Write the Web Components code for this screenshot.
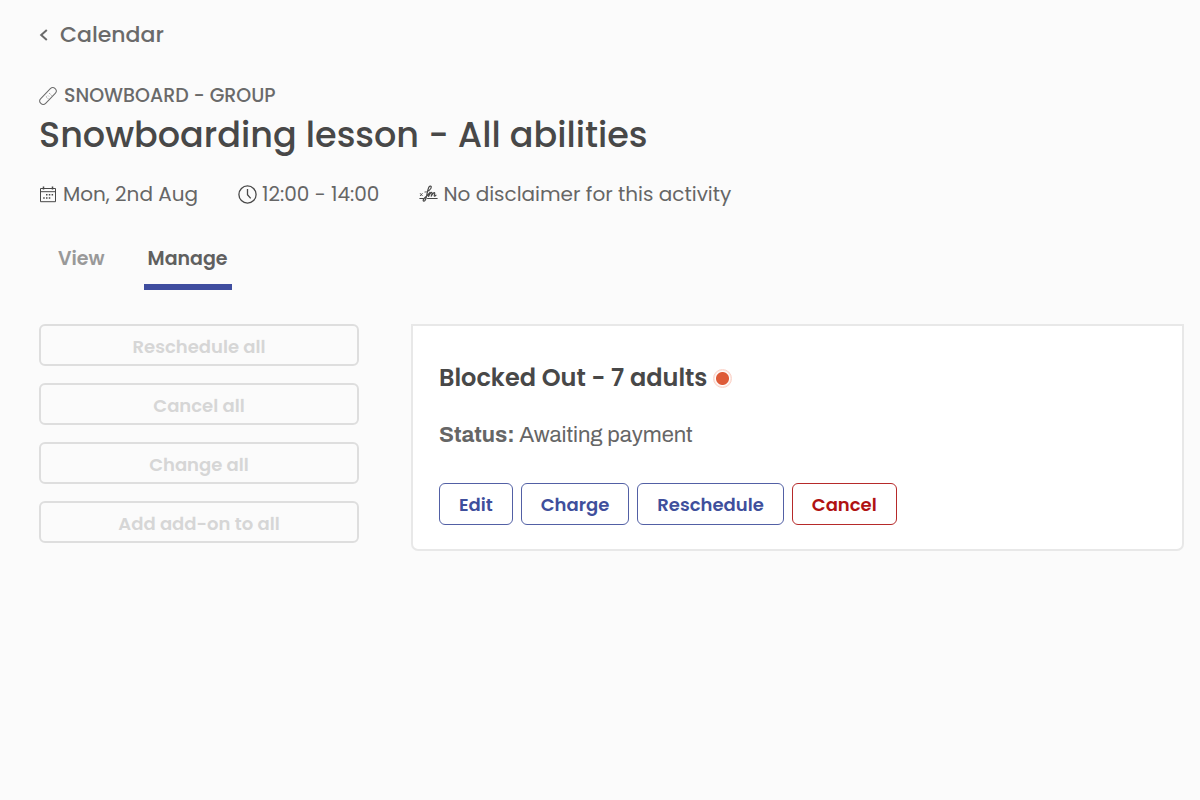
<!DOCTYPE html>
<html lang="en">
<head>
<meta charset="utf-8">
<meta name="viewport" content="width=device-width, initial-scale=1">
<title>Snowboarding lesson - All abilities</title>
<style>
	body {
		margin: 0;
		background: #fbfbfb;
		color: #666;
		font-family: Poppins, Inter, "Liberation Sans", sans-serif;
	}
</style>
</head>
<body>
<activity-page></activity-page>

<script>
// icons.js
const ICONS = {
	back: `<svg width="9" height="12" viewBox="0 0 9 12" fill="none" stroke="currentColor" stroke-width="2"><path d="M7.800 1 2.200 6l5.600 5"/></svg>`,
	snowboard: `<svg width="19" height="20" viewBox="0 0 19 20" fill="none" stroke="currentColor" stroke-width="1"><rect x="-1.300" y="6.600" width="20.600" height="6.800" rx="3.400" transform="rotate(-46 9 10)"/><path d="M6.900 10.300l.9.900M8.300 11.800l.8.800M10.300 7.200l.9.900M11.800 8.700l.8.800M9.200 9.700l.6.600" stroke-width=".8"/></svg>`,
	calendar: `<svg width="19" height="17" viewBox="-1 0 19 17" fill="none" stroke="currentColor" stroke-width="1"><path d="M.5 2.500h15v13.200H.5zM.5 5.700h15"/><path d="M3.500.5v3M12.500.5v3" stroke-width="1.500"/><path d="M6 8.800h1.500M8.800 8.800h1.500M11.600 8.800h1.500M3.200 12h1.500M6 12h1.500M8.800 12h1.500" stroke-width="1.400"/></svg>`,
	clock: `<svg width="19" height="19" viewBox="0 0 19 19" fill="none" stroke="currentColor" stroke-width="1.300"><circle cx="9.500" cy="9.500" r="8.600"/><path d="M9.500 4v5.700l3.200 3.700"/></svg>`,
	signature: `<svg width="19" height="18" viewBox="0 0 19 18" fill="none" stroke="currentColor" stroke-linecap="round" stroke-linejoin="round"><path d="M.8 13.500h3.700M8.500 13.500h9.700" stroke-width="1"/><path d="M1.300 8.500l2 2.200M3.300 8.500l-2 2.200" stroke-width=".9"/><path d="M6 7c3.300-.2 6.500-3.200 6.300-5.100-.2-1.400-1.900-.9-2.600.6C8.500 5.200 8 9.600 7.100 13c-.6 2.300-1.700 3.500-2.600 3-1.300-.8 1.500-3.500 3.600-5.200.8-.6 1.500-1.500 2-2.500M10.900 7.200l-1.300 4.200c.9-1.800 2.400-4.300 3.300-3.900.7.400-.4 2.500-.7 3.700 1-1.700 2.600-3.900 3.400-3.400.8.500-.9 2.700-.3 3.300.4.300 1.200-.3 1.700-.9" stroke-width="1.200"/></svg>`,
};

// Shared base: every element renders its markup into an open shadow root
class BaseElement extends HTMLElement {
	constructor() {
		super();
		this._shadow = this.attachShadow({ mode: "open" });
	}
	connectedCallback() {
		this._shadow.innerHTML = this.render();
	}
}

class UiIcon extends BaseElement {
	render() {
		return `
			<style>
				:host { display: inline-flex; flex: none; }
				svg { display: block; }
			</style>
			${ICONS[this.getAttribute("name")] || ""}
		`;
	}
}

class BackLink extends BaseElement {
	render() {
		return `
			<style>
				:host { display: flex; }
				a {
					display: flex;
					align-items: center;
					gap: 12px;
					color: #6a6a6a;
					font-size: 22px;
					font-weight: 500;
					line-height: 32px;
					text-decoration: none;
				}
			</style>
			<a href="${this.getAttribute("href") || "#"}"><ui-icon name="back"></ui-icon><slot></slot></a>
		`;
	}
}

class ActivityHeader extends BaseElement {
	render() {
		return `
			<style>
				:host { display: block; }
				.category {
					display: flex;
					align-items: center;
					gap: 6px;
					margin: 0;
					color: #6a6a6a;
					font-size: 19px;
					font-weight: 500;
					line-height: 24px;
					text-transform: uppercase;
				}
				h1 {
					margin: 2px 0 22px;
					color: #484848;
					font-size: 35px;
					font-weight: 500;
					line-height: 50px;
				}
				.meta { display: flex; flex-wrap: wrap; gap: 8px 40px; }
			</style>
			<p class="category"><ui-icon name="snowboard"></ui-icon><slot name="category"></slot></p>
			<h1><slot name="title"></slot></h1>
			<div class="meta"><slot></slot></div>
		`;
	}
}

class MetaItem extends BaseElement {
	render() {
		return `
			<style>
				:host {
					display: flex;
					align-items: center;
					gap: 5px;
					font-size: 20px;
					line-height: 24px;
				}
				ui-icon { color: #484848; }
			</style>
			<ui-icon name="${this.getAttribute("icon")}"></ui-icon><slot></slot>
		`;
	}
}

class TabBar extends BaseElement {
	render() {
		return `
			<style>
				:host { display: flex; gap: 35px; padding-left: 15px; }
			</style>
			<slot></slot>
		`;
	}
}

class TabItem extends BaseElement {
	render() {
		const active = this.hasAttribute("active");
		return `
			<style>
				:host { display: block; }
				button {
					display: block;
					padding: 15px 4px 13px;
					border: 0;
					border-bottom: 6px solid transparent;
					background: none;
					color: #999;
					font: inherit;
					font-size: 19px;
					font-weight: 600;
					line-height: 24px;
					cursor: pointer;
				}
				button[aria-current="true"] { border-color: #3f4d9f; color: #606060; }
			</style>
			<button type="button" aria-current="${active}"><slot></slot></button>
		`;
	}
}

class OutlineButton extends BaseElement {
	render() {
		const disabled = this.hasAttribute("disabled") ? "disabled" : "";
		return `
			<style>
				:host { display: block; --tone: #3f4f9c; --edge: #5260a5; }
				:host([danger]) { --tone: #b01212; --edge: #b62a2a; }
				:host([disabled]) { --tone: #d6d6d6; --edge: #dedede; }
				button {
					box-sizing: border-box;
					width: 100%;
					height: 42px;
					padding: 2px 19px 0;
					border: 1px solid var(--edge);
					border-radius: 6px;
					background: transparent;
					color: var(--tone);
					font: inherit;
					font-size: 18px;
					font-weight: 600;
					line-height: 24px;
					cursor: pointer;
				}
				button:disabled { padding-top: 3px; border-width: 2px; cursor: default; }
			</style>
			<button type="button" ${disabled}><slot></slot></button>
		`;
	}
}

class BookingCard extends BaseElement {
	render() {
		return `
			<style>
				:host {
					display: block;
					padding: 36px 26px 24px;
					border: 2px solid #e8e8e8;
					border-radius: 0 0 7px 7px;
					background: #fff;
				}
				h2 {
					display: flex;
					align-items: center;
					gap: 6px;
					margin: 0 0 29px;
					color: #484848;
					font-size: 24px;
					font-weight: 600;
					line-height: 32px;
				}
				.dot {
					box-sizing: border-box;
					width: 19px;
					height: 19px;
					border: 1px solid #fbd3c9;
					border-radius: 50%;
					background: radial-gradient(circle, #de5b38 6px, #fff 7px, #fdeae5 8px);
				}
				.status {
					margin: 0 0 36px;
					font-family: Archivo, "Liberation Sans", sans-serif;
					font-size: 22px;
					line-height: 24px;
				}
				.actions { display: flex; flex-wrap: wrap; gap: 8px; }
			</style>
			<h2><slot name="title"></slot><span class="dot"></span></h2>
			<p class="status"><strong>Status:</strong> <slot name="status"></slot></p>
			<div class="actions"><slot></slot></div>
		`;
	}
}

class ActivityPage extends BaseElement {
	render() {
		return `
			<style>
				:host { display: block; padding: 19px 16px 32px 39px; }
				activity-header { margin-top: 33px; }
				tab-bar { margin-top: 26px; }
				main {
					display: grid;
					grid-template-columns: 320px minmax(0, 1fr);
					align-items: start;
					gap: 52px;
					margin-top: 34px;
				}
				.bulk { display: grid; gap: 17px; }
				@media (max-width: 800px) {
					main { grid-template-columns: 1fr; gap: 24px; }
				}
			</style>
			<back-link href="#calendar">Calendar</back-link>
			<activity-header>
				<span slot="category">Snowboard - Group</span>
				<span slot="title">Snowboarding lesson - All abilities</span>
				<meta-item icon="calendar">Mon, 2nd Aug</meta-item>
				<meta-item icon="clock">12:00 - 14:00</meta-item>
				<meta-item icon="signature">No disclaimer for this activity</meta-item>
			</activity-header>
			<tab-bar>
				<tab-item>View</tab-item>
				<tab-item active>Manage</tab-item>
			</tab-bar>
			<main>
				<div class="bulk">
					<outline-button disabled>Reschedule all</outline-button>
					<outline-button disabled>Cancel all</outline-button>
					<outline-button disabled>Change all</outline-button>
					<outline-button disabled>Add add-on to all</outline-button>
				</div>
				<booking-card>
					<span slot="title">Blocked Out - 7 adults</span>
					<span slot="status">Awaiting payment</span>
					<outline-button>Edit</outline-button>
					<outline-button>Charge</outline-button>
					<outline-button>Reschedule</outline-button>
					<outline-button danger>Cancel</outline-button>
				</booking-card>
			</main>
		`;
	}
}

customElements.define("ui-icon", UiIcon);
customElements.define("back-link", BackLink);
customElements.define("activity-header", ActivityHeader);
customElements.define("meta-item", MetaItem);
customElements.define("tab-bar", TabBar);
customElements.define("tab-item", TabItem);
customElements.define("outline-button", OutlineButton);
customElements.define("booking-card", BookingCard);
customElements.define("activity-page", ActivityPage);
</script>
</body>
</html>
